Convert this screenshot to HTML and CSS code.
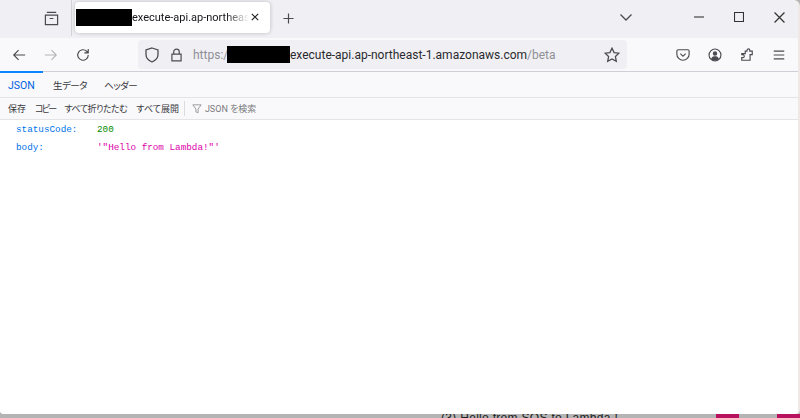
FILE: index.html
```html
<!DOCTYPE html>
<html lang="ja">
<head>
<meta charset="utf-8">
<title>JSON</title>
<link rel="stylesheet" href="styles.css">
</head>
<body>
<div class="window">
  <div class="tabbar">
    <div class="tabbar-left">
      <svg class="ico" viewBox="0 0 16 16"><path d="M3 1.500h10M1.500 4.500h13v10h-13zM6 8h4"/></svg>
    </div>
    <div class="tab">
      <span class="redact redact-tab"></span>
      <span class="tab-title">execute-api.ap-northeast-1.amazonaws.com/beta</span>
      <svg class="ico tab-close" viewBox="0 0 10 10"><path d="M1 1l8 8M9 1l-8 8"/></svg>
    </div>
    <svg class="ico newtab" viewBox="0 0 12 12"><path d="M6 .5v11M.5 6h11"/></svg>
    <div class="spacer"></div>
    <svg class="ico chev" viewBox="0 0 12 7"><path d="M.5 .5L6 6l5.500-5.500"/></svg>
    <div class="winctl">
      <svg class="ico w-ico" viewBox="0 0 10 10"><path d="M0 5h10"/></svg>
      <svg class="ico w-ico" viewBox="0 0 10 10"><path d="M.5 .5h9v9h-9z"/></svg>
      <svg class="ico w-ico" viewBox="0 0 10 10"><path d="M.5 .5l9 9M9.500 .5l-9 9"/></svg>
    </div>
  </div>
  <div class="navbar">
    <svg class="ico nav-ico nav-back" viewBox="0 0 16 16"><path d="M15 8H2M7.500 2.500L2 8l5.500 5.500"/></svg>
    <svg class="ico nav-ico nav-fwd" viewBox="0 0 16 16"><path d="M1 8h13M8.500 2.500L14 8l-5.500 5.500"/></svg>
    <svg class="ico nav-ico nav-reload" viewBox="0 0 16 16"><path d="M14 8a6 6 0 1 1-1.800-4.300L14 5.500M14 1v4.500H9.500"/></svg>
    <div class="urlbar">
      <svg class="ico url-shield" viewBox="0 0 14 16"><path d="M7 1l6 2v4.500c0 3.500-2.500 6-6 7.500-3.500-1.500-6-4-6-7.500V3z"/></svg>
      <svg class="ico url-lock" viewBox="0 0 12 15"><path d="M1 6.500h10v7.500H1zM3 6.500V4a3 3 0 0 1 6 0v2.500"/></svg>
      <span class="url"><span class="dim scheme">https:/</span><span class="redact redact-url"></span><span>execute-api.ap-northeast-1.amazonaws.com</span><span class="dim">/beta</span></span>
      <div class="spacer"></div>
      <svg class="ico url-star" viewBox="0 0 16 16"><path d="M8 1.200l2.100 4.400 4.800.6-3.500 3.300.9 4.800L8 12l-4.300 2.300.9-4.800L1.100 6.200l4.800-.6z"/></svg>
    </div>
    <div class="nav-right">
      <svg class="ico nav-tool" viewBox="0 0 16 16"><path d="M2.500 2h11A1.500 1.500 0 0 1 15 3.500V7a7 7 0 0 1-14 0V3.500A1.500 1.500 0 0 1 2.500 2zM5 6.500l3 3 3-3"/></svg>
      <svg class="ico nav-tool" viewBox="0 0 16 16"><circle cx="8" cy="8" r="6.800"/><circle class="solid" cx="8" cy="6.300" r="2.500"/><path class="solid" d="M3.500 12.500c1-2.500 2.500-3 4.500-3s3.500.5 4.500 3c-1 1.200-2.700 2-4.500 2s-3.500-.8-4.500-2z"/></svg>
      <svg class="ico nav-tool" viewBox="0 0 16 16"><path d="M6 3.500h2V2.600a1.600 1.600 0 0 1 3.200 0v.9H14v4h-2.500v6.500H2v-3h1.200a1.700 1.700 0 0 0 0-3.400H2V6.500h4z"/></svg>
      <svg class="ico nav-tool" viewBox="0 0 16 16"><path d="M2 3.500h12M2 8h12M2 12.500h12"/></svg>
    </div>
  </div>
  <div class="viewer-tabs">
    <div class="vtab vtab-active">JSON</div>
    <div class="vtab">生データ</div>
    <div class="vtab">ヘッダー</div>
  </div>
  <div class="viewer-tools">
    <span class="tool">保存</span>
    <span class="tool tool-kata">コピー</span>
    <span class="tool tool-kana">すべて折りたたむ</span>
    <span class="tool">すべて展開</span>
    <span class="tool-sep"></span>
    <svg class="ico filter" viewBox="0 0 12 12"><path d="M1 1h10L7.300 6v4.500l-2.600-1V6z"/></svg>
    <span class="search">JSON を検索</span>
  </div>
  <div class="content">
    <div class="row"><span class="key">statusCode:</span><span class="num">200</span></div>
    <div class="row"><span class="key">body:</span><span class="str">'"Hello from Lambda!"'</span></div>
  </div>
</div>
<div class="behind"><span class="behind-text">(3) Hello from SQS to Lambda !</span><span class="badge"></span><span class="badge badge2"></span></div>
</body>
</html>
```
FILE: styles.css
```css
* { box-sizing: border-box; }
html, body { margin: 0; height: 418px; overflow: hidden; }
body { background: #b4b4b4; font-family: Roboto, "Noto Sans CJK JP", sans-serif; color: #15141a; }
.window { height: 414px; margin-right: 2px; background: #fff; display: flex; flex-direction: column; overflow: hidden; border-top-right-radius: 6px; border-bottom-left-radius: 4px; border-bottom-right-radius: 4px; box-shadow: 2px 0 0 #eee8e6; }
.ico { fill: none; stroke: #4a4a50; stroke-width: 1.300; display: block; flex: none; }
.spacer { flex: 1; }
.redact { display: inline-block; background: #000; flex: none; }

.tabbar { height: 38px; flex: none; background: #f0f0f4; display: flex; align-items: center; }
.tabbar-left { width: 72px; height: 36px; margin-top: -2px; border-right: 1px solid #d4d4d8; display: flex; align-items: center; padding-left: 44px; flex: none; }
.tabbar-left .ico { width: 15px; height: 15px; }
.tab { width: 195px; height: 31px; margin: -4px 0 0 3px; flex: none; background: #fff; border-radius: 4px; box-shadow: 0 0 4px rgba(0,0,0,.22); display: flex; align-items: center; padding-left: 1px; overflow: hidden; font-size: 11px; }
.redact-tab { width: 56px; height: 17px; }
.tab-title { white-space: nowrap; width: 117px; overflow: hidden; flex: none; -webkit-mask-image: linear-gradient(to right, #000 80%, transparent); mask-image: linear-gradient(to right, #000 80%, transparent); }
.tab-close { width: 8px; height: 8px; margin-left: 2px; stroke-width: 1.500; stroke: #222; }
.newtab { width: 11px; height: 11px; margin: -1px 0 0 13px; }
.chev { width: 12px; height: 7px; margin: -3px 62px 0 0; }
.winctl { display: flex; align-items: center; gap: 30px; margin: -4px 13px 0 0; }
.w-ico { width: 10px; height: 10px; stroke: #333; stroke-width: 1.100; }
.w-ico:last-child { width: 11px; height: 11px; }

.navbar { height: 34px; flex: none; background: #f9f9fb; border-bottom: 1px solid #cfcfd8; display: flex; align-items: center; }
.nav-ico { width: 14px; height: 14px; }
.nav-back { margin-left: 12px; }
.nav-fwd { margin-left: 18px; stroke: #b5b5ba; }
.nav-reload { margin-left: 18px; }
.urlbar { width: 489px; height: 29px; margin: 0 0 0 48px; background: #f0f0f4; border-radius: 4px; display: flex; align-items: center; padding: 0 7px; font-size: 12px; }
.url-shield { width: 14px; height: 16px; }
.url-lock { width: 11px; height: 14px; margin-left: 12px; }
.url { display: flex; align-items: center; margin-left: 11px; white-space: nowrap; color: #2a2a2e; }
.dim { color: #8f8f94; }
.scheme { width: 34px; flex: none; }
.redact-url { width: 63px; height: 17px; }
.url-star { width: 16px; height: 16px; }
.nav-right { display: flex; align-items: center; gap: 18px; margin-left: 49px; }
.nav-tool { width: 14px; height: 14px; }
.solid { fill: #4a4a50; stroke: none; }

.viewer-tabs { height: 26px; flex: none; background: #f9f9fb; border-bottom: 1px solid #e4e4e7; display: flex; font-size: 9.500px; letter-spacing: -.5px; color: #38383d; font-feature-settings: "palt"; }
.vtab { padding: 1px 9px 0 8px; display: flex; align-items: center; border-top: 2px solid transparent; height: 25px; margin-top: -1px; }
.vtab-active { color: #0060df; border-top-color: #0a84ff; width: 43px; margin-right: 2px; font-size: 10.500px; letter-spacing: 0; }

.viewer-tools { height: 22px; flex: none; background: #f9f9fb; border-bottom: 1px solid #e4e4e7; display: flex; align-items: center; padding-left: 8px; font-size: 9px; color: #38383d; font-feature-settings: "palt"; }
.tool { margin-right: 9px; white-space: nowrap; }
.tool-kata { letter-spacing: -1.800px; }
.tool-kana { letter-spacing: -.5px; }
.tool-sep { width: 1px; height: 15px; background: #dcdce0; margin: 0 7px 0 -4px; }
.filter { width: 10px; height: 10px; stroke: #8a8a90; stroke-width: 1; }
.search { color: #7b7b80; margin-left: 3px; }

.content { flex: 1; background: #fff; padding: 1px 0 0 16px; font-family: "Liberation Mono", monospace; font-size: 9.300px; }
.row { height: 17.500px; display: flex; align-items: center; }
.key { width: 81px; color: #0074e8; flex: none; }
.num { color: #058b00; }
.str { color: #dd00a9; }

.behind { height: 4px; flex: none; display: flex; overflow: hidden; background: #b4b4b4; align-items: flex-start; }
.behind-text { width: 180px; flex: none; margin: -3px 0 0 441px; line-height: 14px; font-family: "Liberation Sans", sans-serif; font-size: 12px; letter-spacing: .3px; color: #222; white-space: nowrap; }
.badge { width: 26px; height: 4px; margin-left: 95px; background: #b8125f; }
.badge2 { margin-left: 38px; }
```
